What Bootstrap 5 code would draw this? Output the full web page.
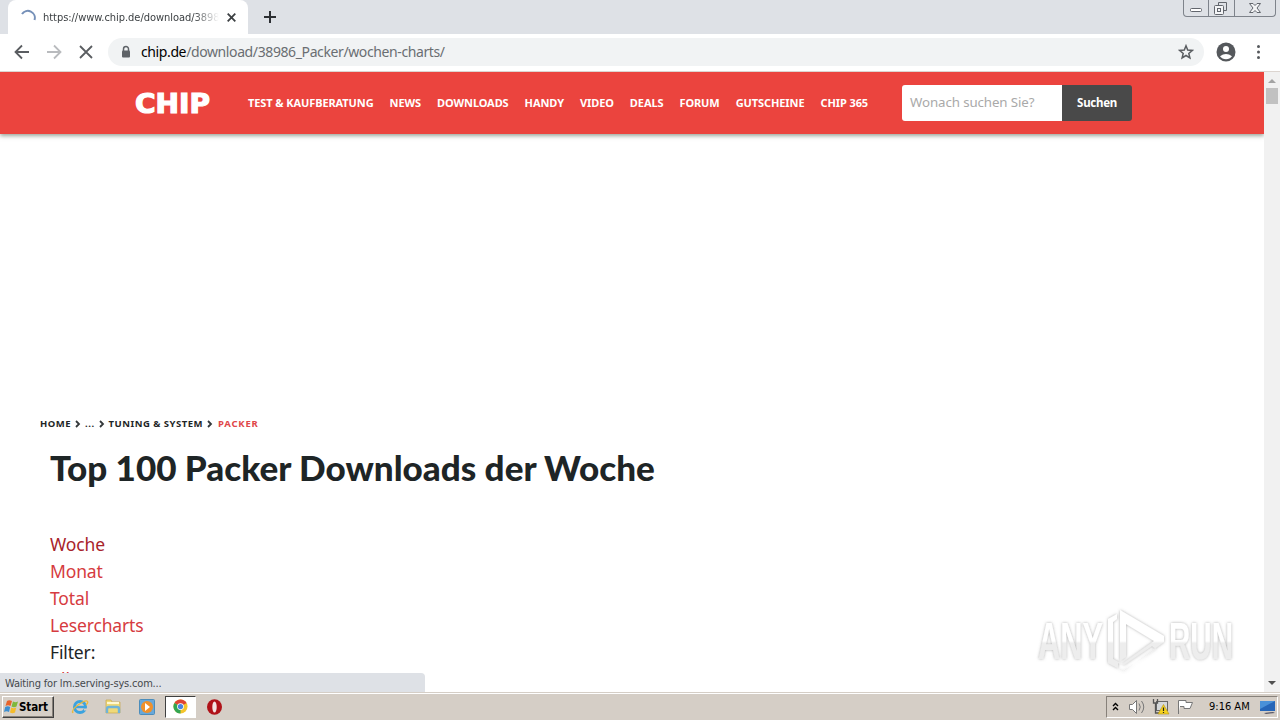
<!DOCTYPE html>
<html lang="de">
<head>
  <meta charset="UTF-8" />
  <meta name="viewport" content="width=device-width, initial-scale=1.0"/>
  <title>Top 100 Packer Downloads der Woche</title>
  <link href="https://cdn.jsdelivr.net/npm/bootstrap@5.3.3/dist/css/bootstrap.min.css" rel="stylesheet">

  <style>
    body {
      width: 1280px;
      height: 720px;
      font-family: "Noto Sans", sans-serif;
      color: #1e2526;
      line-height: 1;
      white-space: nowrap;
    }

    svg {
      display: block;
      flex-shrink: 0;
    }

    /* browser window */
    .tab-strip {
      height: 34px;
      background: #dee1e6;
      padding-left: 8px;
    }

    .page-tab {
      width: 240px;
      height: 34px;
      background: #fff;
      border-radius: 8px 8px 0 0;
      padding-left: 12px;
      font: 11px "DejaVu Sans Condensed", "DejaVu Sans", sans-serif;
      font-stretch: condensed;
      color: #3c4043;
    }

    .tab-title {
      width: 176px;
      margin-left: 7px;
      letter-spacing: -0.04px;
      -webkit-mask-image: linear-gradient(to right, #000 150px, transparent 176px);
    }

    .window-buttons {
      width: 93px;
      height: 17px;
      margin-right: 4px;
      border: 1px solid #7e838b;
      border-top: 0;
      border-radius: 0 0 4px 4px;
    }

    .toolbar {
      height: 38px;
      border-bottom: 1px solid #dcd5d0;
      padding-left: 14px;
      padding-bottom: 1px;
    }

    .address {
      width: 1096px;
      height: 28px;
      margin-left: 14px;
      padding: 0 10px 0 10px;
      border-radius: 14px;
      background: #f1f3f4;
      font-size: 14px;
      color: #6a6e72;
    }

    .address-text {
      margin-left: 7px;
      letter-spacing: -0.39px;
    }

    .viewport {
      height: 620px;
    }

    /* site */
    .site-header {
      height: 62px;
      background: #eb443e;
      box-shadow: 0 2px 4px rgba(60, 80, 60, 0.5);
      padding-left: 134px;
    }

    .site-nav {
      width: 638px;
      margin-left: 37px;
      padding-bottom: 1px;
      font: bold 11px "Noto Sans", sans-serif;
      letter-spacing: -0.09px;
      color: #fff;
    }

    .site-nav a {
      color: #fff;
      text-decoration: none;
      margin-right: 16px;
    }

    .search-box {
      width: 230px;
      height: 36px;
      margin-left: 16px;
      border-radius: 3px;
      overflow: hidden;
    }

    .search-field {
      width: 160px;
      background: #fff;
      padding-left: 8px;
      font-size: 13.3px;
      letter-spacing: -0.1px;
      color: #a9a9a9;
    }

    .search-submit {
      width: 70px;
      background: #494949;
      color: #fff;
      font-size: 11.5px;
      letter-spacing: -0.3px;
      font-weight: bold;
    }

    .crumbs {
      margin: 284px 0 0 40px;
      height: 12px;
      font-size: 9.5px;
      font-weight: bold;
      letter-spacing: 0.5px;
    }

    .crumb-current {
      margin-left: 1px;
      letter-spacing: 0.8px;
      color: #e0474a;
    }

    .page-title {
      margin: 13px 0 0 50px;
      font-family: "Lato", sans-serif;
      font-size: 35.05px;
      line-height: 48px;
      font-weight: 900;
    }

    .chart-links {
      margin: 40px 0 0 50px;
      font-size: 17.5px;
      line-height: 27px;
      letter-spacing: -0.15px;
    }

    .chart-links a {
      color: #d63b40;
      text-decoration: none;
    }

    .chart-links .current {
      color: #a8232b;
    }

    .status-bubble {
      left: 0;
      bottom: 0;
      width: 425px;
      height: 19px;
      padding: 1px 0 0 5px;
      background: #dee1e6;
      border-radius: 0 4px 0 0;
      font: 11px "DejaVu Sans Condensed", "DejaVu Sans", sans-serif;
      letter-spacing: -0.18px;
      color: #45484c;
    }

    .watermark {
      right: 24px;
      bottom: 14px;
    }

    .scroll-track {
      width: 16px;
      background: #f1f1f1;
    }

    .scroll-thumb {
      width: 12px;
      height: 16px;
      background: #c1c1c1;
    }

    /* taskbar */
    .taskbar {
      height: 28px;
      background: #d5cec6;
      border-top: 1px solid #d5cec6;
      box-shadow: inset 0 1px #fff;
      padding: 0 2px 0 2px;
    }

    .start-btn {
      width: 52px;
      height: 22px;
      border: 1px solid;
      border-color: #fff #404040 #404040 #fff;
      box-shadow: inset -1px -1px #87817a;
      font: bold 11.5px "DejaVu Sans Condensed", "DejaVu Sans", sans-serif;
      letter-spacing: -0.1px;
      color: #000;
    }

    .task-chrome {
      width: 31px;
      height: 22px;
      background: #fff;
      border: 1px solid;
      border-color: #404040 #fff #fff #404040;
    }

    .tray {
      width: 172px;
      height: 22px;
      border: 1px solid;
      border-color: #87817a #fff #fff #87817a;
      font: 11px "DejaVu Sans Condensed", "DejaVu Sans", sans-serif;
      color: #000;
    }
  </style>
</head>
<body class="overflow-hidden d-flex flex-column">

  <div class="tab-strip d-flex">
    <div class="page-tab d-flex align-items-center">
      <svg width="16" height="16" viewBox="0 0 16 16"><path d="M2 5A7 7 0 0 1 14.500 11" fill="none" stroke="#7590b8" stroke-width="2"/></svg>
      <div class="tab-title overflow-hidden">https://www.chip.de/download/3898</div>
      <svg class="ms-2" width="9" height="9" viewBox="0 0 9 9"><path d="M.7.7l7.600 7.600M8.300.7L.7 8.300" stroke="#3c4043" stroke-width="1.800"/></svg>
    </div>
    <svg class="mt-2 ms-3" width="13" height="18" viewBox="0 0 13 18"><path d="M0 9h12M6 3v12" stroke="#2c2f33" stroke-width="2"/></svg>
    <div class="window-buttons ms-auto">
      <svg width="91" height="16" viewBox="0 0 91 16" fill="none" stroke="#62666d">
        <path d="M24.500 0v16M50.500 0v16" stroke="#7e838b"/>
        <rect x="6.500" y="8.500" width="11" height="3" rx="1" fill="#fff"/>
        <path d="M34.500 5V2.500h8v8h-3"/>
        <rect x="30.500" y="5.500" width="9" height="9" rx="1" fill="#f4f5f7"/>
        <rect x="33.500" y="8.500" width="3" height="3"/>
        <path d="M65.500 3.500h3.500l2 2 2-2h3.500l-3.500 4.500 3.500 4.500h-3.500l-2-2-2 2h-3.500l3.500-4.500z" fill="#f4f5f7"/>
      </svg>
    </div>
  </div>

  <div class="toolbar d-flex align-items-center bg-white">
    <svg width="80" height="16" viewBox="0 0 80 16" fill="none" stroke-width="1.800">
      <path d="M15 8H2M8 1.500L1.500 8 8 14.500" stroke="#5a5d61"/>
      <path d="M33 8h13M40 1.500L46.500 8 40 14.500" stroke="#b9bbbe"/>
      <path d="M66 2l12 12M78 2L66 14" stroke="#5a5d61"/>
    </svg>
    <div class="address d-flex align-items-center">
      <svg width="16" height="16" viewBox="0 0 16 16"><path d="M5.500 7V5a2.500 2.500 0 0 1 5 0v2" fill="none" stroke="#5f6368" stroke-width="1.500"/><rect x="4" y="6.500" width="8" height="7" rx="1" fill="#5f6368"/></svg>
      <div class="address-text"><span class="text-black">chip.de</span>/download/38986_Packer/wochen-charts/</div>
      <svg class="ms-auto" width="16" height="16" viewBox="0 0 16 16"><path d="M8 1.800l1.700 4.300 4.600.3-3.500 3 1.100 4.500L8 11.500l-3.900 2.400 1.100-4.500-3.500-3 4.600-.3z" fill="none" stroke="#5a5d61" stroke-width="1.500"/></svg>
    </div>
    <svg width="60" height="20" viewBox="0 0 60 20" fill="#55585c">
      <circle cx="22" cy="10" r="9.500"/>
      <circle cx="22" cy="7" r="3" fill="#fff"/>
      <path d="M16 14.200q6-4.600 12 0-2.200 3-6 3t-6-3z" fill="#fff"/>
      <circle cx="54.500" cy="4.500" r="1.500"/><circle cx="54.500" cy="10" r="1.500"/><circle cx="54.500" cy="15.500" r="1.500"/>
    </svg>
  </div>

  <div class="viewport d-flex position-relative bg-white">
    <main class="flex-grow-1 overflow-hidden">
      <header class="site-header d-flex align-items-center">
        <svg width="77" height="22" viewBox="0 0 77 22"><text x="1" y="20.500" font-family="DejaVu Sans" font-weight="bold" font-size="26" textLength="75" lengthAdjust="spacingAndGlyphs" fill="#fff" stroke="#fff" stroke-width="1.200">CHIP</text></svg>
        <nav class="site-nav d-flex">
          <a href="#">TEST &amp; KAUFBERATUNG</a>
          <a href="#">NEWS</a>
          <a href="#">DOWNLOADS</a>
          <a href="#">HANDY</a>
          <a href="#">VIDEO</a>
          <a href="#">DEALS</a>
          <a href="#">FORUM</a>
          <a href="#">GUTSCHEINE</a>
          <a href="#">CHIP 365</a>
        </nav>
        <div class="search-box d-flex">
          <div class="search-field d-flex align-items-center">Wonach suchen Sie?</div>
          <div class="search-submit d-flex align-items-center justify-content-center">Suchen</div>
        </div>
      </header>

      <div class="crumbs d-flex align-items-center">
        <span>HOME</span>
        <svg class="mx-1" width="6" height="8" viewBox="0 0 6 8"><path d="M1 1l3 3-3 3" fill="none" stroke="#33383a" stroke-width="1.800"/></svg>
        <span>...</span>
        <svg class="mx-1" width="6" height="8" viewBox="0 0 6 8"><path d="M1 1l3 3-3 3" fill="none" stroke="#33383a" stroke-width="1.800"/></svg>
        <span>TUNING &amp; SYSTEM</span>
        <svg class="mx-1" width="6" height="8" viewBox="0 0 6 8"><path d="M1 1l3 3-3 3" fill="none" stroke="#33383a" stroke-width="1.800"/></svg>
        <span class="crumb-current">PACKER</span>
      </div>

      <h1 class="page-title">Top 100 Packer Downloads der Woche</h1>

      <div class="chart-links d-flex flex-column">
        <a class="current" href="#">Woche</a>
        <a href="#">Monat</a>
        <a href="#">Total</a>
        <a href="#">Lesercharts</a>
        <span>Filter:</span>
        <a href="#">Alle</a>
      </div>
    </main>

    <div class="scroll-track d-flex flex-column align-items-center">
      <svg width="16" height="16" viewBox="0 0 16 16"><path d="M4 11l4-4 4 4z" fill="#a3a3a3"/></svg>
      <div class="scroll-thumb"></div>
      <svg class="mt-auto" width="16" height="16" viewBox="0 0 16 16"><path d="M4 5h8L8 9z" fill="#505050"/></svg>
    </div>

    <svg class="watermark position-absolute" width="224" height="74" viewBox="1032 604 224 74">
      <defs>
        <filter id="halo" x="-10%" y="-20%" width="120%" height="140%"><feDropShadow dx="0" dy="0" stdDeviation="1.600" flood-color="#777" flood-opacity=".6"/></filter>
        <linearGradient id="fade" gradientUnits="userSpaceOnUse" x1="0" y1="604" x2="0" y2="678"><stop offset=".5" stop-color="#fff"/><stop offset=".53" stop-color="#ededed"/></linearGradient>
      </defs>
      <g filter="url(#halo)" fill="url(#fade)" font-family="Liberation Sans" font-weight="bold" font-size="52">
        <text x="1038" y="659" textLength="65" lengthAdjust="spacingAndGlyphs">ANY</text>
        <text x="1169" y="659" textLength="64" lengthAdjust="spacingAndGlyphs">RUN</text>
        <path d="M1120 610l44 26v6l-40 29-6-3v-5l4 1 32-23-28-17v33l-6 4zM1108 619l9-5v5l-4 3v37l11 6 28-19 4 3-33 22-15-8z" fill-rule="evenodd"/>
      </g>
    </svg>

    <div class="status-bubble position-absolute d-flex align-items-center">Waiting for lm.serving-sys.com...</div>
  </div>

  <div class="taskbar d-flex align-items-center">
    <div class="start-btn d-flex align-items-center">
      <svg width="16" height="16" viewBox="0 0 16 16">
        <path d="M4 2q2-1.500 5 0L7.500 7q-2.500-1.500-5 0z" fill="#e8632a"/>
        <path d="M10 2.500q2.500 1.500 5 0L13.500 7.500q-2.500 1.500-5 0z" fill="#7fb83c"/>
        <path d="M2.200 8q2.500-1.500 5 0L6 13q-2.500-1.500-5 0z" fill="#3d8ed0"/>
        <path d="M8.200 8.500q2.500 1.500 5 0L12 13.500q-2.500 1.500-5 0z" fill="#f5bc2c"/>
      </svg>
      <span>Start</span>
    </div>
    <svg width="111" height="22" viewBox="54 0 111 22">
      <circle cx="80" cy="11" r="5.500" fill="none" stroke="#3ba3df" stroke-width="3"/>
      <path d="M76 11h9" stroke="#3ba3df" stroke-width="2.400"/>
      <path d="M84 12.500h4v2h-4z" fill="#d5cec6"/>
      <path d="M73 17q-2-3 5-8t9-4q2 1-1 4" fill="none" stroke="#e8b93c" stroke-width="1.300"/>
      <path d="M106 4h5l1 2h8v11h-14z" fill="#efd978" stroke="#c8a84a" stroke-width=".7"/>
      <path d="M107 7h12" stroke="#fff8d0" stroke-width="2"/>
      <path d="M107 17v-4q0-2 2-2h8q2 0 2 2v4" fill="none" stroke="#70b4d8" stroke-width="2.400"/>
      <rect x="139.500" y="3.500" width="15" height="15" rx="1" fill="#68a8da" stroke="#4c8dbb"/>
      <circle cx="147" cy="11" r="6" fill="#f0912b"/>
      <path d="M145 7l5 4-5 4z" fill="#fff"/>
    </svg>
    <div class="task-chrome d-flex align-items-center justify-content-center">
      <svg width="15" height="15" viewBox="-8 -8 16 16">
        <circle r="7.500" fill="#f5c52c"/>
        <path d="M0 0L-6.500-3.750A7.500 7.500 0 0 1 6.500-3.750z" fill="#df4435"/>
        <path d="M0 0L-6.500-3.750A7.500 7.500 0 0 0 0 7.500z" fill="#33a552"/>
        <circle r="3.600" fill="#fff"/><circle r="2.800" fill="#4a84e0"/>
      </svg>
    </div>
    <svg class="ms-2" width="20" height="20" viewBox="0 0 20 20">
      <ellipse cx="10.500" cy="10" rx="7.500" ry="7.700" fill="#b01218"/>
      <ellipse cx="10.500" cy="10" rx="2.200" ry="5.500" fill="#f3e4e2"/>
    </svg>
    <div class="tray d-flex align-items-center ms-auto">
      <svg width="102" height="20" viewBox="1107 697 102 20" fill="none">
        <path d="M1113 706l2.500-2.500 2.500 2.500M1113 710l2.500-2.500 2.500 2.500" stroke="#000" stroke-width="1.400"/>
        <path d="M1129.500 704.500h3l4-4v13l-4-4h-3z" fill="#fff" stroke="#777"/>
        <path d="M1139 703.500q2.500 3.500 0 7M1141.500 701q4.500 6 0 12" stroke="#777"/>
        <rect x="1156.500" y="701.500" width="11" height="9" fill="#d5d8da" stroke="#666"/>
        <path d="M1153.500 699v4h4v-4M1155.500 703v10h4" stroke="#555" stroke-width="1.300"/>
        <path d="M1163.500 704.500l5.500 9.500h-11z" fill="#f5d21f" stroke="#b49211" stroke-width=".6"/>
        <path d="M1163.500 707.500v3.500M1163.500 712v1" stroke="#222" stroke-width="1.200"/>
        <path d="M1178.500 714v-13.500h7.500v2h6.500l-2.500 6h-6v-2h-4" fill="#fff" stroke="#777"/>
      </svg>
      <span>9:16 AM</span>
      <svg class="ms-auto" width="18" height="18" viewBox="0 0 18 18"><path d="M1 3h15v10H1z" fill="#2666b8"/><path d="M1 3h15L1 11z" fill="#4a91d8"/><path d="M5 15l9-1 2 1-9 1z" fill="#556"/></svg>
    </div>
  </div>

  <script src="https://cdn.jsdelivr.net/npm/bootstrap@5.3.3/dist/js/bootstrap.bundle.min.js"></script>
</body>
</html>
